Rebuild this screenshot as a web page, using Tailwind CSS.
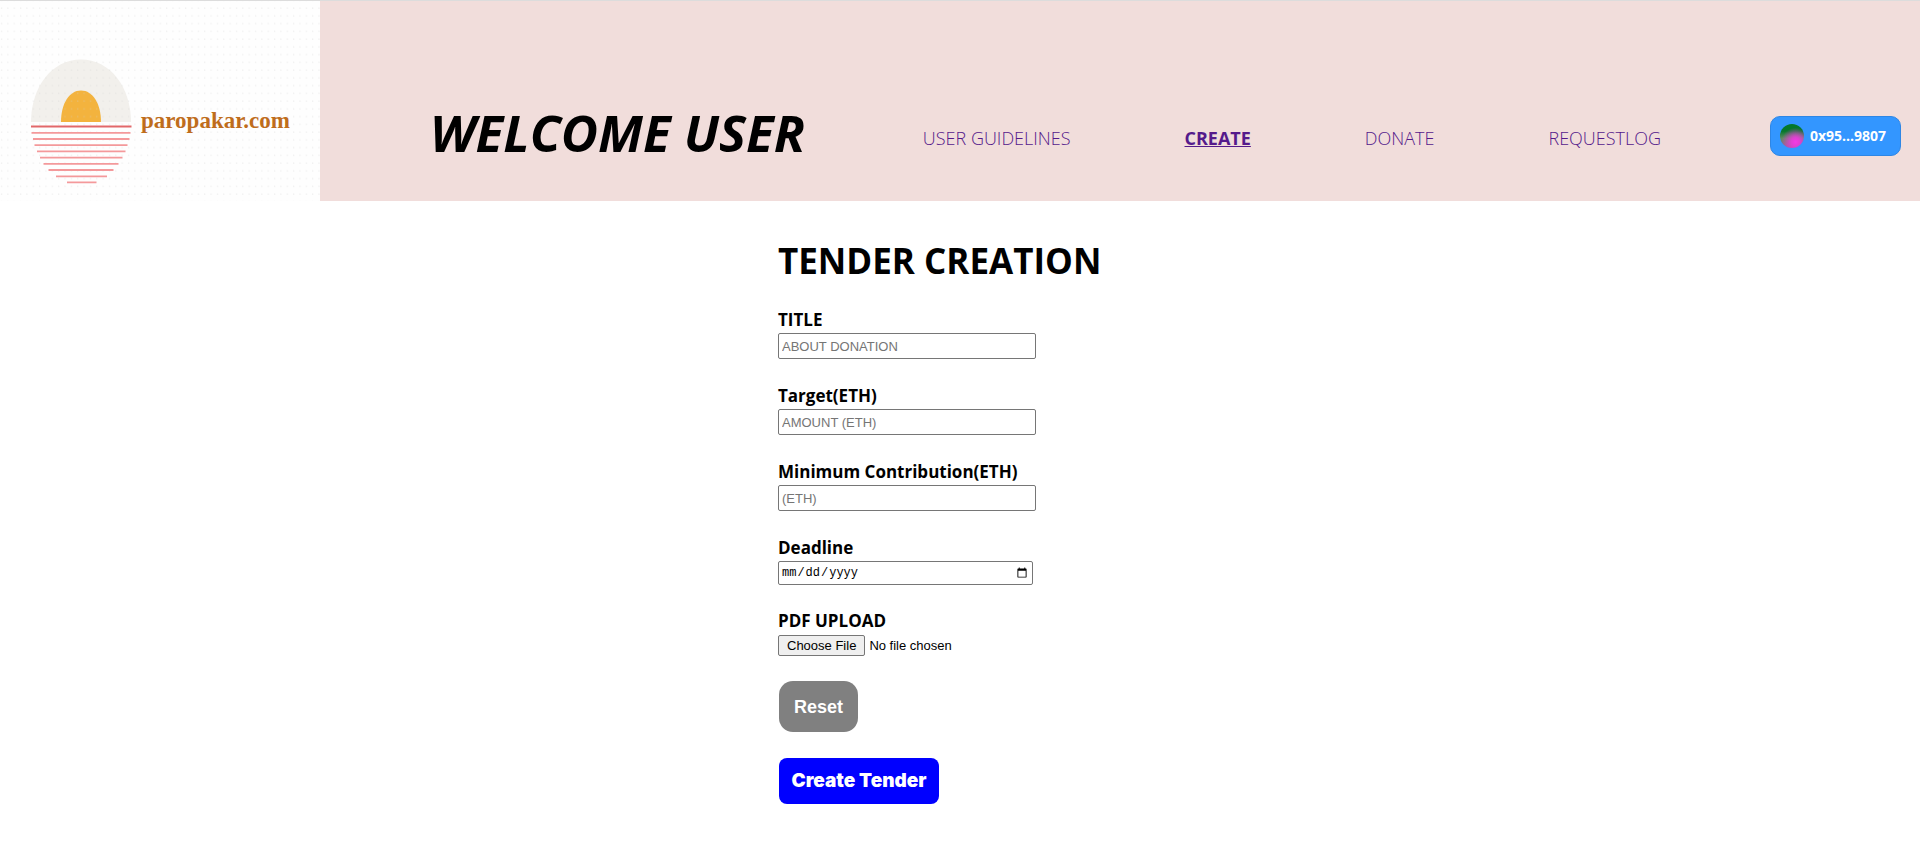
<!DOCTYPE html>
<html lang="en">
<head>
<meta charset="utf-8">
<meta name="viewport" content="width=device-width, initial-scale=1">
<title>Tender Creation</title>
<script src="https://cdn.jsdelivr.net/npm/@tailwindcss/browser@4"></script>
</head>
<body class="min-h-screen bg-white font-['Open_Sans','Noto_Sans',sans-serif] text-black">
<header class="flex border-t border-[#dcdcdc] bg-[#f1dddb]">
  <a href="#" aria-label="paropakar.com" class="shrink-0">
    <svg class="block h-[200px] w-80" viewBox="0 0 320 200">
      <defs>
        <pattern id="dots" x="0" y="6" width="6.35" height="7.75" patternUnits="userSpaceOnUse"><circle cx="1.6" cy="1" r="0.6" fill="#cfcfcf"/></pattern>
      </defs>
      <rect width="320" height="200" fill="#fefefe"/>
      <path d="M31 121C31 86 52 58.500 81 58.500S131 86 131 121Z" fill="#f2f0ec"/>
      <path d="M61 121C61 103 69 89.500 81 89.500S101 103 101 121Z" fill="#f3b33e"/>
      <rect width="320" height="200" fill="url(#dots)" opacity="0.55"/>
      <path d="M31 125.500H131.500" stroke="#e2686a" stroke-width="1.800"/>
      <path d="M31.500 131.800H130.500M33 138H129.500M34.500 144.200H127.500M37 150.300H125.500M40 156.600H122.500M43.500 162.800H118.500M48.500 169H113.500M56 175.300H107M67 181.300H96.500" stroke="#f4999b" stroke-width="1.800"/>
      <text x="141" y="127" font-family="Liberation Serif, serif" font-weight="700" font-size="23" fill="#bf6d1c">paropakar.com</text>
    </svg>
  </a>
  <div class="flex flex-1 items-center pt-[69px] pr-[19px] pl-[110px]">
    <h1 class="pb-2 text-[51px] leading-[60px] font-bold whitespace-nowrap italic">WELCOME USER</h1>
    <nav class="ml-[118px] flex flex-1 items-center justify-between pt-1 text-lg font-light whitespace-nowrap text-[#551a8b]">
      <a href="#">USER GUIDELINES</a>
      <a href="#" class="font-bold underline">CREATE</a>
      <a href="#">DONATE</a>
      <a href="#">REQUESTLOG</a>
    </nav>
    <button type="button" class="ml-[109px] flex h-10 w-[131px] items-center gap-1.5 rounded-[10px] border border-[#2e86e5] bg-[#3396ff] pl-[9px] text-sm font-bold text-white">
      <span class="size-6 shrink-0 rounded-full bg-[radial-gradient(circle_at_65%_75%,#f23be6_0%,#e03fd3_18%,transparent_60%),linear-gradient(#04782b_30%,#5f8a62_60%,#9a5f90_100%)]"></span>
      0x95...9807
    </button>
  </div>
</header>
<main class="flex justify-center">
  <form class="mr-[40px] flex w-[324px] flex-col items-start pt-[33px] text-[17px] leading-[22px] font-bold">
    <h2 class="mb-[21px] text-[35px] leading-[54px] font-bold whitespace-nowrap">TENDER CREATION</h2>
    <label for="title" class="mb-0.5">TITLE</label>
    <input id="title" type="text" placeholder="ABOUT DONATION" class="mb-[26px] h-[26px] w-[258px] rounded-[2px] border border-[#767676] px-[3px] font-['Liberation_Sans',sans-serif] text-[13px] font-normal placeholder:text-[#757575]">
    <label for="target" class="mb-0.5">Target(ETH)</label>
    <input id="target" type="text" placeholder="AMOUNT (ETH)" class="mb-[26px] h-[26px] w-[258px] rounded-[2px] border border-[#767676] px-[3px] font-['Liberation_Sans',sans-serif] text-[13px] font-normal placeholder:text-[#757575]">
    <label for="minimum" class="mb-0.5 whitespace-nowrap">Minimum Contribution(ETH)</label>
    <input id="minimum" type="text" placeholder="(ETH)" class="mb-[26px] h-[26px] w-[258px] rounded-[2px] border border-[#767676] px-[3px] font-['Liberation_Sans',sans-serif] text-[13px] font-normal placeholder:text-[#757575]">
    <label for="deadline" class="mb-0.5">Deadline</label>
    <input id="deadline" type="date" class="mb-[25px] h-6 w-[255px] rounded-[2px] border border-[#767676] px-0.5 font-['Liberation_Mono',monospace] text-xs font-normal">
    <label for="pdf" class="mb-0.5">PDF UPLOAD</label>
    <input id="pdf" type="file" class="mt-px mb-[25px] h-[21px] w-[258px] font-['Liberation_Sans',sans-serif] text-[13px] leading-[19px] font-normal file:mr-1 file:h-[21px] file:rounded-[2px] file:border file:border-solid file:border-[#767676] file:bg-[#efefef] file:px-2">
    <button type="reset" class="mb-[26px] ml-px h-[51px] w-[79px] rounded-[14px] bg-[#808080] font-['Liberation_Sans',sans-serif] text-lg text-white">Reset</button>
    <button type="submit" class="ml-px h-[46px] w-40 rounded-lg bg-[#0000ff] font-['Inter',sans-serif] text-[19px] font-black whitespace-nowrap text-white">Create Tender</button>
  </form>
</main>
</body>
</html>
